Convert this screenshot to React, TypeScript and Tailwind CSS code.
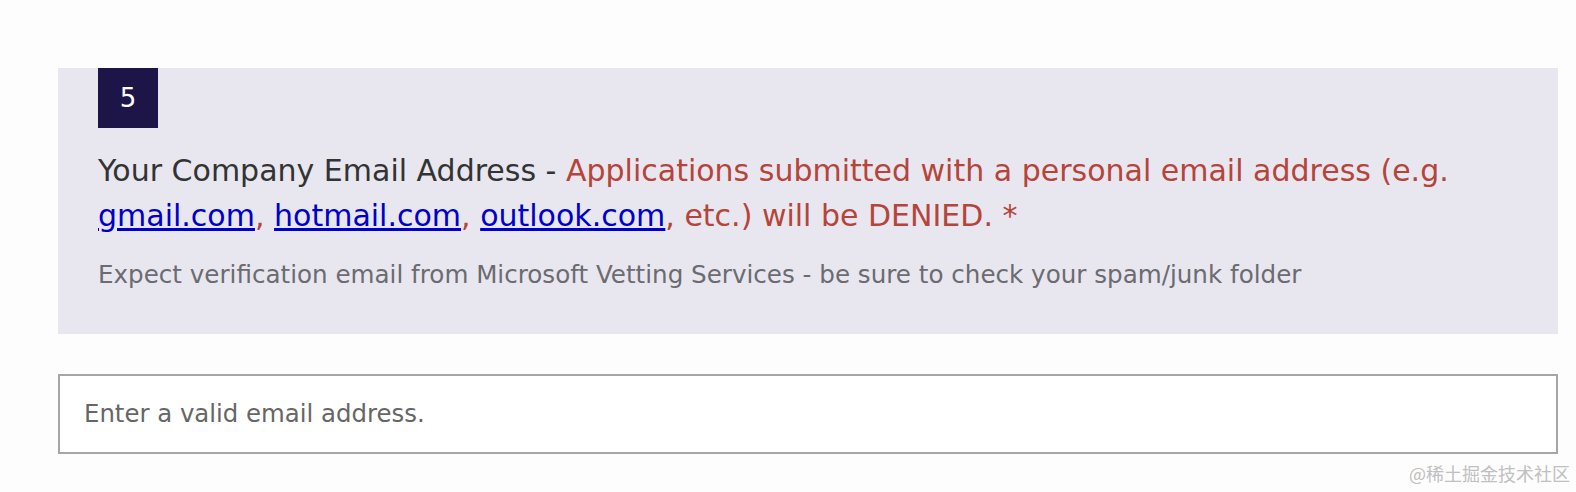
export default function App() {
  const font = { fontFamily: '"DejaVu Sans", Verdana, sans-serif' };
  return (
    <div className="w-[1576px] h-[492px] bg-[#fdfdfd] relative overflow-hidden" style={font}>
      <div className="pt-[68px] pl-[58px] pr-[18px]">
        <div className="bg-[#e8e7f0] px-[40px] pb-[40px] h-[266px]">
          <div className="w-[60px] h-[60px] bg-[#1d1447] text-white text-[26px] flex items-center justify-center">5</div>
          <div className="mt-[20px] text-[30px] leading-[45px] text-[#333333]">
            Your Company Email Address -{" "}
            <span className="text-[#b5443a]">
              Applications submitted with a personal email address (e.g.{" "}
              <a className="text-[#0000cc] underline">gmail.com</a>,{" "}
              <a className="text-[#0000cc] underline">hotmail.com</a>,{" "}
              <a className="text-[#0000cc] underline">outlook.com</a>, etc.) will be DENIED. *
            </span>
          </div>
          <div className="mt-[20px] text-[24.6px] leading-[34px] text-[#6b6b70]">
            Expect verification email from Microsoft Vetting Services - be sure to check your spam/junk folder
          </div>
        </div>
        <div className="mt-[40px] h-[80px] border-2 border-[#a6a6a6] bg-white flex items-center pl-[24px] text-[24.4px] text-[#666666]">
          Enter a valid email address.
        </div>
      </div>
      <div className="absolute right-[6px] bottom-[9px] text-[18px] leading-[20px] text-[#c0c0c0]" style={{ fontFamily: '"Noto Sans CJK SC", sans-serif' }}>
        @稀土掘金技术社区
      </div>
    </div>
  );
}
